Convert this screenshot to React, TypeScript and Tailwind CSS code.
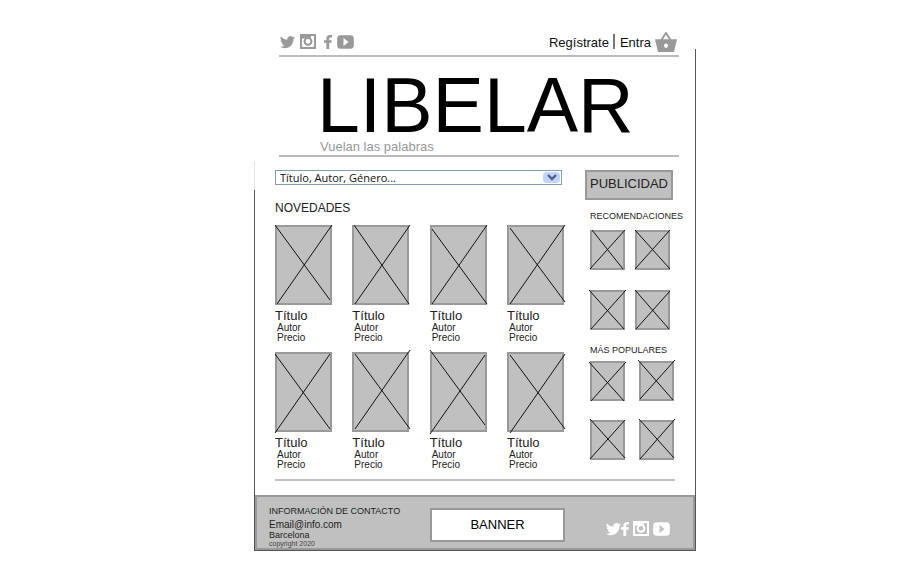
import React from "react";

type Segment = [number, number, number, number];

interface PictureProps {
  width: number;
  height: number;
  lines: Segment[];
}

interface Book {
  id: number;
  lines: Segment[];
}

const novelties: Book[] = [
  { id: 1, lines: [[0, 0, 55, 75], [57, 0, 2, 79]] },
  { id: 2, lines: [[2, 0, 57, 79], [58, 0, 3, 79]] },
  { id: 3, lines: [[2, 4, 57, 79], [57, 0, 2, 79]] },
  { id: 4, lines: [[3, 3, 58, 77], [58, 0, 3, 79]] },
  { id: 5, lines: [[0, 2, 55, 77], [55, 2, 0, 81]] },
  { id: 6, lines: [[3, 2, 58, 77], [58, -2, 3, 77]] },
  { id: 7, lines: [[0, -2, 55, 73], [55, 3, 0, 82]] },
  { id: 8, lines: [[3, 3, 58, 77], [58, 2, 3, 81]] },
];

const recommended: Book[] = [
  { id: 1, lines: [[2, 0, 33, 39], [35, 0, 0, 39]] },
  { id: 2, lines: [[0, 0, 35, 39], [35, 0, 0, 39]] },
  { id: 3, lines: [[-1, 0, 34, 39], [36, 0, 1, 39]] },
  { id: 4, lines: [[0, 0, 34, 39], [35, 1, 1, 39]] },
];

const popular: Book[] = [
  { id: 1, lines: [[-1, 1, 34, 40], [36, 1, 1, 40]] },
  { id: 2, lines: [[-1, -1, 34, 39], [36, -1, 1, 38]] },
  { id: 3, lines: [[0, -1, 35, 38], [35, 0, 0, 39]] },
  { id: 4, lines: [[0, -1, 35, 38], [36, -1, 1, 39]] },
];

function Picture({ width, height, lines }: PictureProps) {
  return (
    <svg width={width} height={height} className="block overflow-visible" aria-hidden="true">
      <rect x="1" y="1" width={width - 2} height={height - 2} fill="#c0c0c0" stroke="#999999" strokeWidth="2" />
      {lines.map(([x1, y1, x2, y2], i) => (
        <line key={i} x1={x1} y1={y1} x2={x2} y2={y2} stroke="#111111" strokeWidth="1" />
      ))}
    </svg>
  );
}

function TwitterIcon() {
  return (
    <svg width="15" height="14" viewBox="0 0 24 21" fill="currentColor" aria-hidden="true">
      <path d="M23.95 3.2a10 10 0 0 1-2.82.77A4.9 4.9 0 0 0 23.3 1.3a9.9 9.9 0 0 1-3.13 1.2 4.92 4.92 0 0 0-8.38 4.48A13.94 13.94 0 0 1 1.64 1.8a4.92 4.92 0 0 0 1.52 6.57 4.9 4.9 0 0 1-2.23-.6v.06a4.92 4.92 0 0 0 3.95 4.83 5 5 0 0 1-2.21.08 4.94 4.94 0 0 0 4.6 3.42A9.87 9.87 0 0 1 0 18.2a13.9 13.9 0 0 0 7.55 2.2c9.05 0 14-7.5 14-13.98l-.02-.64a9.9 9.9 0 0 0 2.42-2.58z" />
    </svg>
  );
}

function InstagramIcon() {
  return (
    <svg width="16" height="15" viewBox="0 0 16 15" fill="none" aria-hidden="true">
      <rect x="1" y="1" width="14" height="13" stroke="currentColor" strokeWidth="2" />
      <path d="M2 2h9v2.500H2z" fill="currentColor" />
      <circle cx="8" cy="7.400" r="3.400" stroke="currentColor" strokeWidth="2" />
    </svg>
  );
}

function FacebookIcon() {
  return (
    <svg width="8" height="14" viewBox="0 0 8 14" fill="currentColor" aria-hidden="true">
      <path d="M2.4 14V7.8H0V5.3h2.4V3.6C2.4 1.2 3.7 0 5.9 0H8v2.5H6.6c-1 0-1.4.4-1.4 1.2v1.6h2.6l-.4 2.5H5.2V14z" />
    </svg>
  );
}

function YoutubeIcon() {
  return (
    <svg width="17" height="14" viewBox="0 0 17 14" fill="currentColor" aria-hidden="true">
      <path
        fillRule="evenodd"
        d="M3 .3Q8.500 0 14 .3Q16.600 .5 16.800 3Q17 7 16.800 11Q16.600 13.500 14 13.700Q8.500 14 3 13.700Q.4 13.500 .2 11Q0 7 .2 3Q.4 .5 3 .3zM6.500 3v8l5-4z"
      />
    </svg>
  );
}

function BasketIcon() {
  return (
    <svg width="22" height="20" viewBox="1 2 22 19" preserveAspectRatio="none" fill="currentColor" aria-hidden="true">
      <path d="M17.21 9l-4.38-6.56c-.19-.28-.51-.42-.83-.42-.32 0-.64.14-.83.43L6.79 9H1l3 12h16l3-12h-5.790zM9 9l3-4.400L15 9H9zm3 8c-1.100 0-2-.9-2-2s.9-2 2-2 2 .9 2 2-.9 2-2 2z" />
    </svg>
  );
}

function Header() {
  return (
    <header className="pl-6 pr-4 pt-7">
      <div className="flex h-[29px] items-center justify-between border-b-2 border-[#bbbbbb]">
        <nav aria-label="Redes sociales" className="flex items-center gap-[5px] pl-px text-[#999999]">
          <a href="#twitter" aria-label="Twitter"><TwitterIcon /></a>
          <a href="#instagram" aria-label="Instagram"><InstagramIcon /></a>
          <a href="#facebook" aria-label="Facebook" className="pl-[3px]"><FacebookIcon /></a>
          <a href="#youtube" aria-label="YouTube"><YoutubeIcon /></a>
        </nav>
        <nav aria-label="Cuenta" className="flex items-center pr-0.5 text-[13px] leading-4 text-[#111111]">
          <a href="#registro" className="pt-0.5">Regístrate</a>
          <span className="ml-1 mr-[5px] h-[15px] w-0.5 bg-[#777777]" />
          <a href="#entrar" className="pt-0.5">Entra</a>
          <a href="#cesta" aria-label="Cesta" className="ml-1 text-[#999999]"><BasketIcon /></a>
        </nav>
      </div>
      <div className="border-b-2 border-[#bbbbbb] pb-px pl-[38px] pt-[14px]">
        <h1 className="text-[77px] leading-[68px] text-black">LIBELAR</h1>
        <p className="pl-[3px] text-[13px] font-medium leading-[15px] text-[#999999]">Vuelan las palabras</p>
      </div>
    </header>
  );
}

function Search() {
  return (
    <div className="relative mr-0.5">
      <select
        aria-label="Buscar"
        className="block h-[15px] w-full appearance-none border border-[#7f9db9] bg-white pl-1 font-['Open_Sans',sans-serif] text-[11px] leading-[13px] text-[#111111] outline-none"
      >
        <option>Título, Autor, Género...</option>
      </select>
      <span className="pointer-events-none absolute inset-y-0.5 right-0.5 flex w-[17px] items-center justify-center rounded-sm bg-[#c3d3fb]">
        <svg width="10" height="7" viewBox="0 0 10 7" fill="none" aria-hidden="true">
          <path d="M1 1l4 4 4-4" stroke="#4d6185" strokeWidth="2.400" />
        </svg>
      </span>
    </div>
  );
}

function BookCard({ book }: { book: Book }) {
  return (
    <article className="w-[57px]">
      <Picture width={57} height={80} lines={book.lines} />
      <h3 className="mt-[3px] text-[13px] leading-[15px] text-[#222222]">Título</h3>
      <p className="pl-0.5 text-[10px] leading-[10px] text-[#222222]">Autor</p>
      <p className="pl-0.5 text-[10px] leading-[10px] text-[#222222]">Precio</p>
    </article>
  );
}

function Footer() {
  return (
    <footer className="border-b border-[#555555]">
      <div className="flex items-center border-2 border-[#999999] bg-[#c0c0c0] pl-3 pr-[23px]">
        <address className="flex-1 whitespace-nowrap pt-[5px] not-italic text-[#222222]">
          <h2 className="text-[9px] leading-[18px]">INFORMACIÓN DE CONTACTO</h2>
          <p className="text-[10px] leading-[10px]">Email@info.com</p>
          <p className="text-[9px] leading-[10px]">Barcelona</p>
          <p className="text-[7px] leading-[8px] text-[#444444]">copyright 2020</p>
        </address>
        <div className="mt-[5px] flex h-[34px] w-[135px] items-center justify-center border-2 border-[#999999] bg-white text-[13px] text-black">
          BANNER
        </div>
        <nav aria-label="Síguenos" className="ml-[41px] flex items-center gap-1 pt-3 text-white">
          <span className="flex items-center">
            <a href="#twitter" aria-label="Twitter"><TwitterIcon /></a>
            <a href="#facebook" aria-label="Facebook"><FacebookIcon /></a>
          </span>
          <a href="#instagram" aria-label="Instagram"><InstagramIcon /></a>
          <a href="#youtube" aria-label="YouTube"><YoutubeIcon /></a>
        </nav>
      </div>
    </footer>
  );
}

export default function App() {
  return (
    <div className="flex bg-white pl-[254px] pr-[215px] font-['Liberation_Sans',Arial,sans-serif]">
      <div className="mt-[161px] w-px border-t-[29px] border-[#e4e4e4] bg-[#555555]" />
      <div className="min-w-0 flex-1">
        <Header />
        <main className="pl-5">
          <div className="flex gap-[21px] pr-[15px] pt-[13px]">
            <section className="min-w-0 flex-1">
              <Search />
              <h2 className="mb-[9px] mt-[15px] text-[12px] leading-4 text-[#222222]">NOVEDADES</h2>
              <div className="grid grid-cols-[repeat(4,57px)] justify-between gap-y-[9px]">
                {novelties.map((book) => (
                  <BookCard key={book.id} book={book} />
                ))}
              </div>
            </section>
            <aside className="w-[95px] text-[#222222]">
              <div className="mr-[7px] flex h-[30px] justify-center border-2 border-[#999999] bg-[#c0c0c0] pt-1 text-[13px] leading-4">
                PUBLICIDAD
              </div>
              <div className="pl-[5px]">
                <h2 className="mb-2 mt-[10px] whitespace-nowrap text-[9px] leading-3">RECOMENDACIONES</h2>
                <div className="grid grid-cols-[35px_35px] gap-x-[10px] gap-y-5">
                  {recommended.map((book) => (
                    <Picture key={book.id} width={35} height={40} lines={book.lines} />
                  ))}
                </div>
                <h2 className="mb-[5px] mt-[14px] whitespace-nowrap text-[9px] leading-3">MÁS POPULARES</h2>
                <div className="grid grid-cols-[35px_35px] gap-x-[14px] gap-y-[19px]">
                  {popular.map((book) => (
                    <Picture key={book.id} width={35} height={40} lines={book.lines} />
                  ))}
                </div>
              </div>
            </aside>
          </div>
          <hr className="mb-[14px] mr-5 mt-[9px] border-0 border-t-2 border-[#c4c4c4]" />
        </main>
        <Footer />
      </div>
      <div className="mt-[49px] w-px bg-[#555555]" />
    </div>
  );
}
